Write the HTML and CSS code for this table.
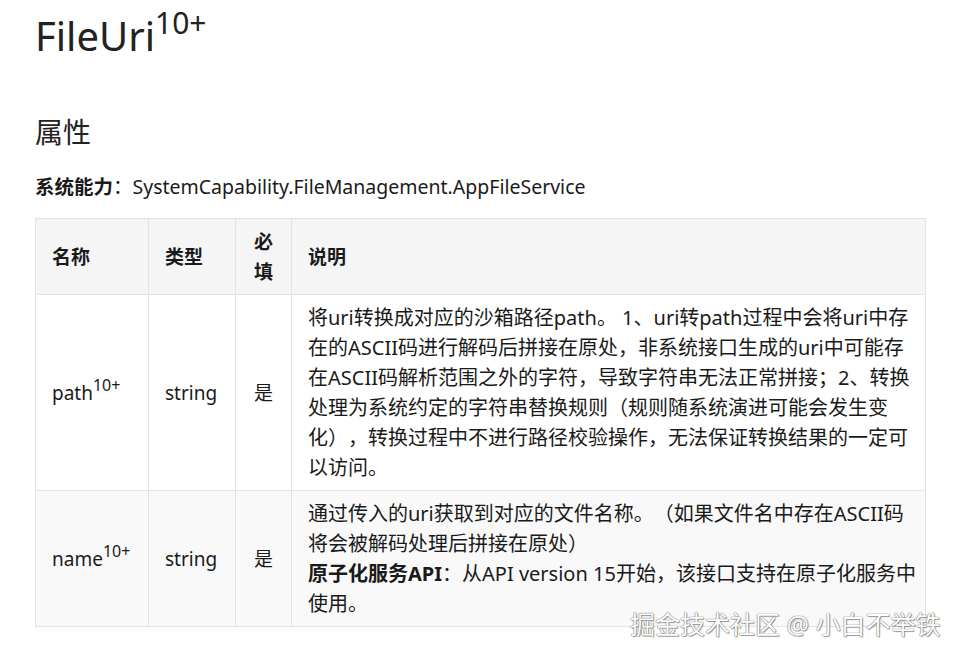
FILE: index.html
```html
<!DOCTYPE html>
<html lang="zh">
<head>
<meta charset="utf-8">
<title>FileUri</title>
<link rel="stylesheet" href="styles.css">
</head>
<body>
<main class="doc">
  <h1 class="title">FileUri<sup class="ver">10+</sup></h1>
  <h2 class="section">属性</h2>
  <p class="cap"><strong>系统能力</strong>：SystemCapability.FileManagement.AppFileService</p>
  <table class="props">
    <colgroup>
      <col class="c-name"><col class="c-type"><col class="c-req"><col class="c-desc">
    </colgroup>
    <thead>
      <tr><th>名称</th><th>类型</th><th>必填</th><th>说明</th></tr>
    </thead>
    <tbody>
      <tr class="odd">
        <td class="mid">path<sup class="v">10+</sup></td>
        <td class="mid">string</td>
        <td class="mid">是</td>
        <td class="desc">将uri转换成对应的沙箱路径path。 1、uri转path过程中会将uri中存在的ASCII码进行解码后拼接在原处，非系统接口生成的uri中可能存在ASCII码解析范围之外的字符，导致字符串无法正常拼接；2、转换处理为系统约定的字符串替换规则（规则随系统演进可能会发生变化），转换过程中不进行路径校验操作，无法保证转换结果的一定可以访问。</td>
      </tr>
      <tr class="even">
        <td class="mid">name<sup class="v">10+</sup></td>
        <td class="mid">string</td>
        <td class="mid">是</td>
        <td class="desc">通过传入的uri获取到对应的文件名称。（如果文件名中存在ASCII码将会被解码处理后拼接在原处）<br><strong>原子化服务API</strong>：从API version 15开始，该接口支持在原子化服务中使用。</td>
      </tr>
    </tbody>
  </table>
</main>
<div class="watermark">掘金技术社区 @ 小白不举铁</div>
</body>
</html>
```

FILE: styles.css
```css
html, body {
  margin: 0;
  padding: 0;
  background: #ffffff;
}

body {
  font-family: "Noto Sans", "Noto Sans CJK SC", sans-serif;
  color: #1a1a1a;
  width: 959px;
  height: 660px;
  overflow: hidden;
  position: relative;
  text-spacing-trim: space-all;
}

.doc {
  padding: 0 34px 0 35px;
}

.title {
  margin: 0;
  padding-top: 12px;
  font-size: 40px;
  line-height: 48px;
  font-weight: 400;
  color: #222;
}

.ver {
  font-size: 30px;
  line-height: 0;
  vertical-align: 17px;
}

.section {
  margin: 0;
  padding-top: 52px;
  font-size: 28px;
  line-height: 40px;
  font-weight: 400;
  color: #222;
}

.cap {
  margin: 0;
  padding-top: 20px;
  font-size: 19.5px;
  line-height: 30px;
}

.cap strong {
  font-weight: 700;
}

.props {
  margin-top: 16px;
  width: 890px;
  border-collapse: collapse;
  table-layout: fixed;
  font-size: 20px;
  line-height: 30px;
}

.c-name { width: 113px; }
.c-type { width: 87px; }
.c-req { width: 56px; }
.c-desc { width: 634px; }

.props th,
.props td {
  border: 1px solid #e3e3e3;
  padding: 8px 16px 7px;
  text-align: left;
  vertical-align: middle;
}

.props th {
  background: #f5f5f5;
  font-weight: 700;
  font-size: 19px;
}

.props th:nth-child(3),
.props td:nth-child(3) {
  text-align: center;
}

.props td.desc {
  vertical-align: top;
  padding-right: 6px;
}

.props td.mid {
  vertical-align: middle;
  font-size: 19px;
}

.odd td {
  background: #ffffff;
}

.even td {
  background: #f9f9f9;
}

.v {
  font-size: 16px;
  line-height: 0;
  vertical-align: 9px;
}

.props strong {
  font-weight: 700;
}

.watermark {
  position: absolute;
  left: 630px;
  top: 607px;
  font-size: 25px;
  line-height: 34px;
  color: #ffffff;
  white-space: nowrap;
  text-shadow: 0 0 1px #6b6b6b, 0 0 1px #6b6b6b, 1px 1px 1px rgba(0,0,0,0.35);
}
```
